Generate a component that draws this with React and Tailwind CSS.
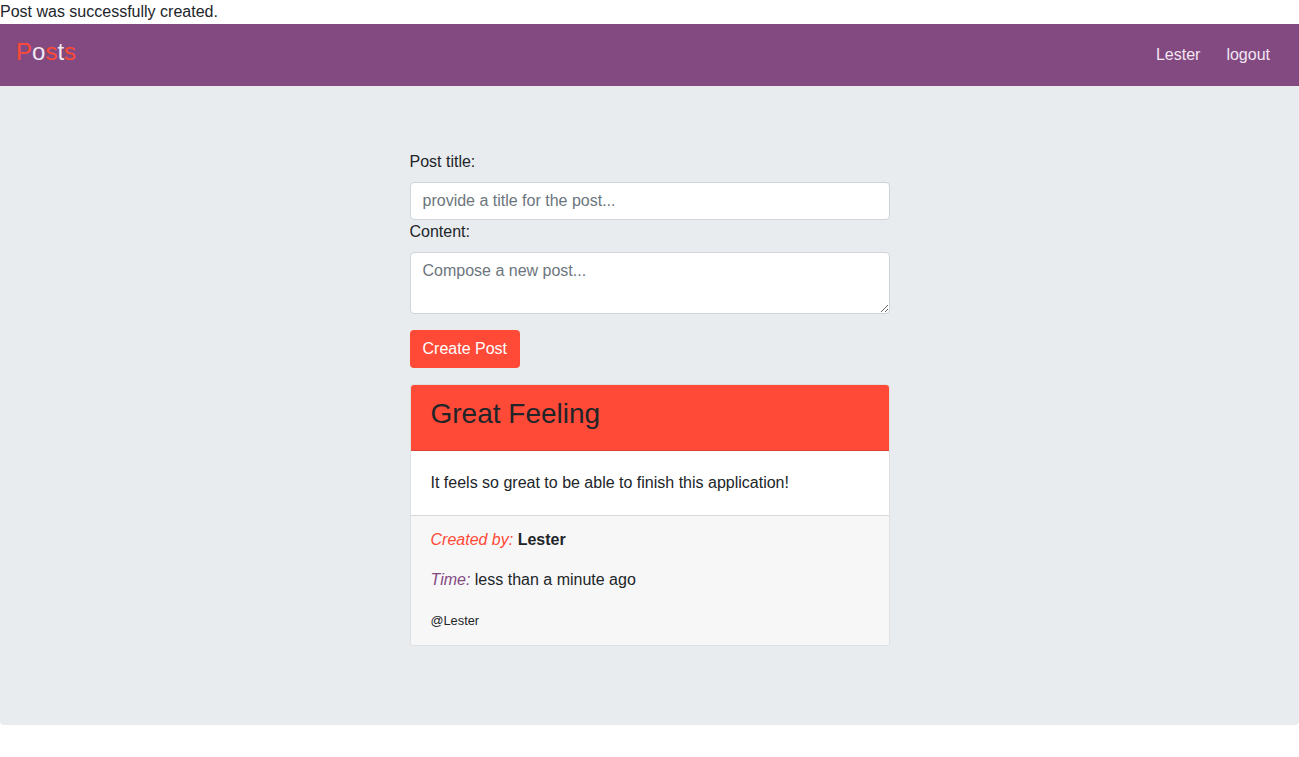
import React, { useState } from 'react';

const Navbar = () => (
  <nav className="flex h-[62px] items-center justify-between bg-[#834a82] px-4">
    <a href="#" className="mb-[6px] text-[24px] leading-[24px]">
      <span className="text-[#ff4a37]">P</span>
      <span className="text-[#f1e9f1]">o</span>
      <span className="text-[#ff4a37]">s</span>
      <span className="text-[#f1e9f1]">t</span>
      <span className="text-[#ff4a37]">s</span>
    </a>
    <ul className="flex items-center">
      <li>
        <a href="#" className="block px-[13px] py-2 text-[#f1e6f1]">Lester</a>
      </li>
      <li>
        <a href="#" className="block px-[13px] py-2 text-[#f1e6f1]">logout</a>
      </li>
    </ul>
  </nav>
);

const PostCard = ({ post }) => (
  <div className="mb-[15px] overflow-hidden rounded-[4px] border border-black/[.125] bg-white">
    <div className="border-b border-black/[.125] bg-[#ff4a37] px-5 pt-3 pb-3">
      <h3 className="mb-2 text-[28px] leading-[33px] font-normal text-[#212529]">{post.title}</h3>
    </div>
    <div className="p-5">
      <p>{post.content}</p>
    </div>
    <div className="border-t border-black/[.125] bg-[#f7f7f7] px-5 py-3">
      <p className="mb-4">
        <em className="text-[#ff4a37]">Created by:</em> <strong className="font-bold">{post.author}</strong>
      </p>
      <p className="mb-4">
        <em className="text-[#834a82]">Time:</em> {post.time}
      </p>
      <p>
        <small className="text-[12.8px]">@{post.author}</small>
      </p>
    </div>
  </div>
);

export default function App() {
  const [title, setTitle] = useState('');
  const [content, setContent] = useState('');

  const post = {
    title: 'Great Feeling',
    content: 'It feels so great to be able to finish this application!',
    author: 'Lester',
    time: 'less than a minute ago',
  };

  return (
    <div className="min-h-[757px] bg-white text-[16px] leading-6 text-[#212529] [font-family:'Liberation_Sans',Arial,sans-serif]">
      <p>Post was successfully created.</p>
      <Navbar />

      {/* Jumbotron */}
      <div className="mb-8 rounded-b-[4px] bg-[#e9ecef] px-8 pt-16 pb-16">
        <div className="mx-auto w-[480px]">
          <form onSubmit={(e) => e.preventDefault()}>
            <label className="mb-2 block">Post title:</label>
            <input
              type="text"
              value={title}
              onChange={(e) => setTitle(e.target.value)}
              placeholder="provide a title for the post..."
              className="block h-[38px] w-full rounded-[4px] border border-[#ced4da] bg-white px-3 py-[6px] placeholder:text-[#6c757d] focus:outline-none"
            />
            <label className="mb-2 block">Content:</label>
            <textarea
              rows="2"
              value={content}
              onChange={(e) => setContent(e.target.value)}
              placeholder="Compose a new post..."
              className="mb-4 block h-[62px] w-full rounded-[4px] border border-[#ced4da] bg-white px-3 py-[6px] placeholder:text-[#6c757d] focus:outline-none"
            ></textarea>
            <button
              type="submit"
              className="mb-4 h-[38px] rounded-[4px] bg-[#ff4a37] px-[13px] text-white"
            >
              Create Post
            </button>
          </form>

          <PostCard post={post} />
        </div>
      </div>
    </div>
  );
}
